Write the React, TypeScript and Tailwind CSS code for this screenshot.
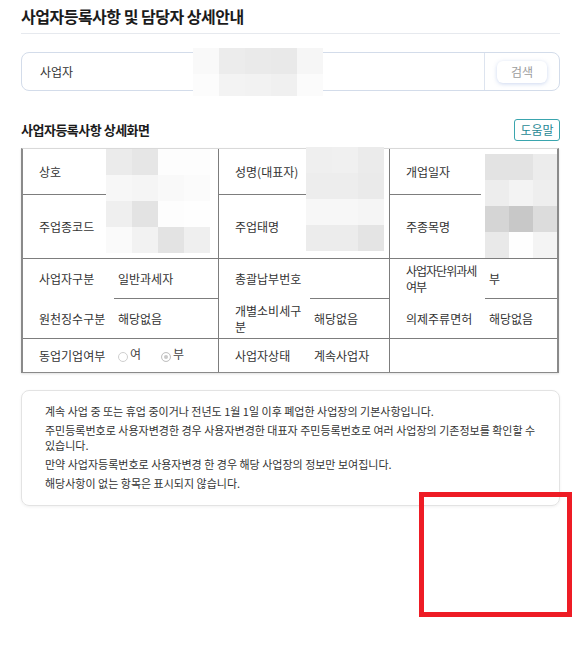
import type { ReactNode } from 'react';

// redaction mosaics, one class per block
const SEARCH_BLUR = [
  ['bg-[#f9f9f9]', 'bg-[#ececec]', 'bg-[#eaeaea]', 'bg-[#e9e9e9]', 'bg-[#f6f6f6]'],
  ['bg-[#fcfcfc]', 'bg-[#f3f3f3]', 'bg-[#f2f2f2]', 'bg-[#f0f0f0]', 'bg-[#fbfbfb]'],
];

const BLUR_1 = [
  ['bg-[#ebebeb]', 'bg-[#e6e6e6]', 'bg-[#fdfdfd]', 'bg-[#fdfdfd]'],
  ['bg-[#f7f7f7]', 'bg-[#f5f5f5]', 'bg-[#f9f9f9]', 'bg-[#fbfbfb]'],
  ['bg-[#efefef]', 'bg-[#e3e3e3]', 'bg-[#fdfdfd]', 'bg-[#fefefe]'],
  ['bg-[#fafafa]', 'bg-[#f2f2f2]', 'bg-[#e3e3e3]', 'bg-[#efefef]'],
];

const BLUR_2 = [
  ['bg-[#efefef]', 'bg-[#f0f0f0]', 'bg-[#ebebeb]'],
  ['bg-[#ededed]', 'bg-[#ededed]', 'bg-[#eaeaea]'],
  ['bg-[#f7f7f7]', 'bg-[#f7f7f7]', 'bg-[#f5f5f5]'],
  ['bg-[#ececec]', 'bg-[#ececec]', 'bg-[#e4e4e4]'],
];

const BLUR_3 = [
  ['bg-[#e3e3e3]', 'bg-[#e3e3e3]', 'bg-[#ececec]'],
  ['bg-[#ededed]', 'bg-[#f3f3f3]', 'bg-[#eeeeee]'],
  ['bg-[#d5d5d5]', 'bg-[#c8c8c8]', 'bg-[#dcdcdc]'],
  ['bg-[#e9e9e9]', 'bg-[#fefefe]', 'bg-[#f4f4f4]'],
];

function Mosaic({ rows, className = '' }: { rows: string[][]; className?: string }) {
  return (
    <div className={`flex flex-col ${className}`}>
      {rows.map((row, i) => (
        <div key={i} className="flex">
          {row.map((c, j) => (
            <div key={j} className={`w-[26px] h-[26px] ${c}`} />
          ))}
        </div>
      ))}
    </div>
  );
}

function Label({ children, className = '' }: { children: ReactNode; className?: string }) {
  return (
    <div className={`flex items-center pl-[16px] leading-[16px] text-[#333] whitespace-nowrap ${className}`}>
      <span>{children}</span>
    </div>
  );
}

// underlined = row 3 values, whose short rule starts 4px into the cell
function Value({ children, className = '', underlined }: { children?: ReactNode; className?: string; underlined?: boolean }) {
  return (
    <div
      className={`flex items-center text-[#333] ${
        underlined ? 'ml-[4px] pl-[4px] border-b border-[#7d7d7d]' : 'pl-[8px]'
      } ${className}`}
    >
      {children}
    </div>
  );
}

function Radio({ checked, label }: { checked?: boolean; label: string }) {
  return (
    <span className="flex items-end gap-[2px]">
      <span
        className={`w-[10px] h-[10px] rounded-full border ${
          checked ? 'border-[#c4c4c4] bg-[#c9c9c9] ring-2 ring-inset ring-white' : 'border-[#cfcfcf] bg-white'
        }`}
      />
      <span className="text-[#444] leading-[12px] -translate-y-[2px]">{label}</span>
    </span>
  );
}

const NOTES = [
  '계속 사업 중 또는 휴업 중이거나 전년도 1월 1일 이후 폐업한 사업장의 기본사항입니다.',
  null,
  '만약 사업자등록번호로 사용자변경 한 경우 해당 사업장의 정보만 보여집니다.',
  '해당사항이 없는 항목은 표시되지 않습니다.',
];

export default function App() {
  const line = 'border-[#7d7d7d]';
  return (
    <div className="relative min-h-[657px] bg-white font-['Noto_Sans_CJK_KR','Noto_Sans',sans-serif] text-[12px] text-[#333]">
      <div className="px-[21px] pt-[6px] w-[581px]">
        <h1 className="text-[16px] font-bold leading-[20px] text-[#1b1b1b] pb-[7px] border-b border-[#e6e9ee] tracking-[-0.5px]">
          사업자등록사항 및 담당자 상세안내
        </h1>

        {/* search */}
        <div className="mt-[18px] h-[39px] flex items-center border border-[#d3dcea] rounded-[8px]">
          <div className="w-[171px] pl-[18px] text-[12px] text-[#333]">사업자</div>
          <Mosaic rows={SEARCH_BLUR} className="-my-[5px] [&>div:last-child>div]:h-[22px]" />
          <div className="flex-1" />
          <div className="w-[75px] h-full flex items-center justify-center border-l border-[#dde4ef]">
            <button className="w-[50px] h-[22px] rounded-[6px] bg-white text-[12px] text-[#9c9c9c] shadow-[0_1px_4px_rgba(110,140,210,0.35)]">
              검색
            </button>
          </div>
        </div>

        {/* section header */}
        <div className="mt-[28px] h-[22px] flex items-center justify-between">
          <h2 className="text-[13px] font-bold text-[#1b1b1b] tracking-[-0.5px]">사업자등록사항 상세화면</h2>
          <button className="h-[22px] w-[46px] rounded-[3px] border border-[#3aa5ae] text-[12px] text-[#1f8995] leading-none">
            도움말
          </button>
        </div>

        {/* detail table */}
        <div className="mt-[7px] w-[538px] border-l-2 border-r-2 border-b border-[#8a8a8a] border-t border-t-[#d9d9d9] shadow-[0_1px_2px_rgba(0,0,0,0.12)] grid grid-cols-[87px_108px_88px_83px_92px_76px] grid-rows-[46px_64px_40px_40px_33px]">
          {/* rows 1-2 */}
          <Label className={`border-b ${line}`}>상호</Label>
          <div className={`row-span-2 border-b ${line}`}>
            <Mosaic rows={BLUR_1} className="-ml-[4px]" />
          </div>
          <Label className={`border-l border-b ${line}`}>성명(대표자)</Label>
          <div className={`row-span-2 border-b ${line}`}>
            <Mosaic rows={BLUR_2} className="-mt-[2px]" />
          </div>
          <Label className={`border-l border-b ${line}`}>개업일자</Label>
          <div className={`row-span-2 border-b ${line}`}>
            <Mosaic rows={BLUR_3} className="mt-[5px] ml-[4px] relative" />
          </div>

          <Label className={`border-b ${line}`}>주업종코드</Label>
          <Label className={`border-l border-b ${line}`}>주업태명</Label>
          <Label className={`border-l border-b ${line}`}>주종목명</Label>

          {/* row 3 */}
          <Label>사업자구분</Label>
          <Value underlined>일반과세자</Value>
          <Label className={`border-l ${line}`}>총괄납부번호</Label>
          <Value underlined />
          <Label className={`border-l ${line} tracking-[-1px]`}>
            사업자단위과세
            <br />
            여부
          </Label>
          <Value underlined>부</Value>

          {/* row 4 */}
          <Label className={`border-b ${line}`}>원천징수구분</Label>
          <Value className={`border-b ${line}`}>해당없음</Value>
          <Label className={`border-l border-b ${line}`}>
            개별소비세구
            <br />
            분
          </Label>
          <Value className={`border-b ${line}`}>해당없음</Value>
          <Label className={`border-l border-b ${line}`}>의제주류면허</Label>
          <Value className={`border-b ${line}`}>해당없음</Value>

          {/* row 5 */}
          <Label>동업기업여부</Label>
          <Value className="gap-[20px]">
            <Radio label="여" />
            <Radio checked label="부" />
          </Value>
          <Label className={`border-l ${line}`}>사업자상태</Label>
          <Value>계속사업자</Value>
          <div className={`col-span-2 border-l ${line}`} />
        </div>

        {/* notes */}
        <div className="mt-[17px] w-[539px] rounded-[8px] border border-[#e3e3e3] shadow-[0_1px_3px_rgba(0,0,0,0.06)] pl-[23px] pr-[10px] pt-[13px] pb-[14px] text-[11px] leading-[15px] text-[#333] flex flex-col gap-[4px]">
          {NOTES.map((n, i) =>
            n ? (
              <p key={i}>{n}</p>
            ) : (
              <p key={i}>
                주민등록번호로 사용자변경한 경우 사용자변경한 대표자 주민등록번호로 여러 사업장의 기존정보를 확인할 수
                <br />
                있습니다.
              </p>
            )
          )}
        </div>
      </div>

      {/* red annotation frame */}
      <div className="absolute left-[419px] top-[492px] w-[153px] h-[125px] border-[5px] border-[#ee1c25]" />
    </div>
  );
}
